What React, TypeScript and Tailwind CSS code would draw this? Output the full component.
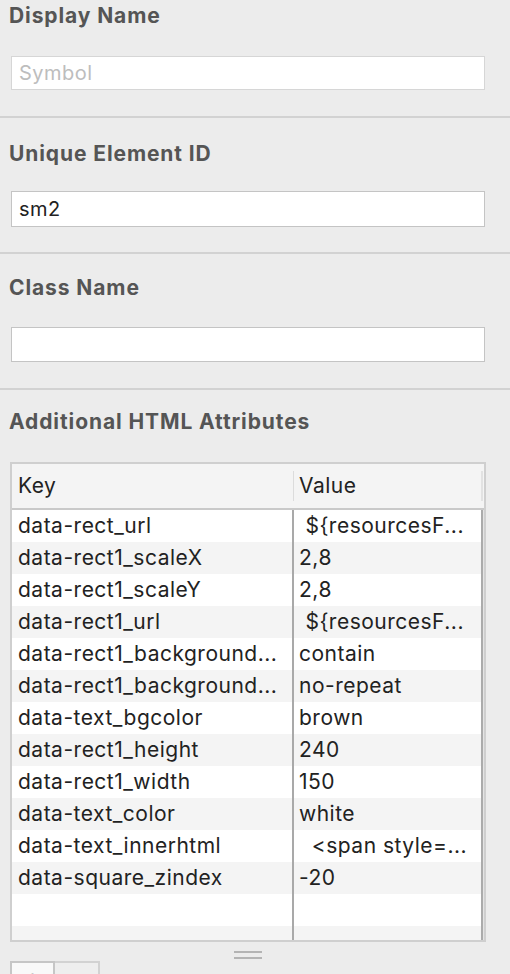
import React from "react";

const rows: [string, string][] = [
  ["data-rect_url", " ${resourcesF..."],
  ["data-rect1_scaleX", "2,8"],
  ["data-rect1_scaleY", "2,8"],
  ["data-rect1_url", " ${resourcesF..."],
  ["data-rect1_background...", "contain"],
  ["data-rect1_background...", "no-repeat"],
  ["data-text_bgcolor", "brown"],
  ["data-rect1_height", "240"],
  ["data-rect1_width", "150"],
  ["data-text_color", "white"],
  ["data-text_innerhtml", "  <span style=..."],
  ["data-square_zindex", "-20"],
  ["", ""],
  ["", ""],
];

function Heading({ children }: { children: React.ReactNode }) {
  return (
    <div className="pl-[9px] text-[21px] leading-[24px] font-bold tracking-[0.9px] text-[#555555]">
      {children}
    </div>
  );
}

export default function App() {
  return (
    <div
      className="w-[510px] h-[974px] overflow-hidden bg-[#ececec] text-[#222222]"
      style={{ fontFamily: "Inter, 'Noto Sans', sans-serif" }}
    >
      {/* Display Name */}
      <div className="pt-[4px]">
        <Heading>Display Name</Heading>
        <div className="mt-[28px] ml-[11px] w-[474px] h-[34px] bg-white border border-[#d6d6d6] flex items-center pl-[7px] text-[20px] tracking-[0.5px] text-[#bdbdbd]">
          Symbol
        </div>
      </div>
      <div className="mt-[26px] h-[2px] bg-[#d2d2d2]" />

      {/* Unique Element ID */}
      <div className="pt-[24px]">
        <Heading>Unique Element ID</Heading>
        <div className="mt-[25px] ml-[11px] w-[474px] h-[36px] bg-white border border-[#c4c4c4] flex items-center pl-[7px] text-[20px] tracking-[0.5px] text-[#222222]">
          sm2
        </div>
      </div>
      <div className="mt-[25px] h-[2px] bg-[#d2d2d2]" />

      {/* Class Name */}
      <div className="pt-[22px]">
        <Heading>Class Name</Heading>
        <div className="mt-[27px] ml-[11px] w-[474px] h-[35px] bg-white border border-[#c4c4c4]" />
      </div>
      <div className="mt-[26px] h-[2px] bg-[#d2d2d2]" />

      {/* Additional HTML Attributes */}
      <div className="pt-[20px]">
        <Heading>Additional HTML Attributes</Heading>
        <div className="mt-[28px] ml-[10px] w-[476px] h-[480px] border-2 border-[#cfcfcf] bg-[#f5f5f5] overflow-hidden flex flex-col">
          {/* header */}
          <div className="h-[46px] flex bg-[#f4f4f4] border-b-2 border-[#c9c9c9] shrink-0">
            <div className="w-[281px] flex items-center pl-[6px] text-[21px] tracking-[0.5px] text-[#222222]">Key</div>
            <div className="w-[1px] my-[7px] bg-[#dcdcdc]" />
            <div className="w-[187px] flex items-center pl-[5px] text-[21px] tracking-[0.5px] text-[#222222]">Value</div>
            <div className="w-[2px] my-[7px] bg-[#e2e2e2]" />
          </div>
          {/* body */}
          <div className="flex-1 flex overflow-hidden">
            <div className="w-[469px] flex flex-col overflow-hidden">
              {rows.map(([k, v], i) => (
                <div
                  key={i}
                  className={`h-[32px] shrink-0 flex ${i % 2 === 0 ? "bg-white" : "bg-[#f4f4f4]"}`}
                >
                  <div className="w-[280px] flex items-center pl-[6px] text-[21px] tracking-[0.5px] whitespace-pre overflow-hidden">
                    {k}
                  </div>
                  <div className="w-[2px] bg-[#a9a9a9]" />
                  <div className="flex-1 flex items-center pl-[5px] text-[21px] tracking-[0.5px] whitespace-pre overflow-hidden">
                    {v}
                  </div>
                </div>
              ))}
            </div>
            <div className="w-[2px] bg-[#ababab]" />
            <div className="w-[1px] bg-[#e4e4e4]" />
          </div>
        </div>
        {/* grip */}
        <div className="flex justify-center mt-[9px] pr-[14px]">
          <div className="flex flex-col gap-[4px]">
            <div className="w-[28px] h-[2px] bg-[#b4b4b4]" />
            <div className="w-[28px] h-[2px] bg-[#b4b4b4]" />
          </div>
        </div>
        {/* buttons */}
        <div className="mt-[2px] ml-[10px] flex">
          <div className="w-[45px] h-[30px] bg-[#f9f9f9] border-2 border-[#c6c6c6] flex justify-center pt-[3px] text-[22px] leading-[22px] text-[#333333]">
            +
          </div>
          <div className="w-[45px] h-[30px] bg-[#eeeeee] border-2 border-l-0 border-[#d2d2d2] flex justify-center pt-[3px] text-[22px] leading-[22px] text-[#333333]">
            −
          </div>
        </div>
      </div>
    </div>
  );
}
